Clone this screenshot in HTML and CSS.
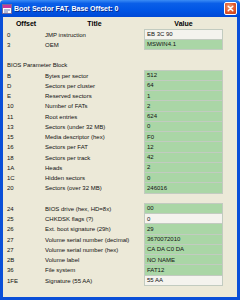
FILE: index.html
```html
<!DOCTYPE html>
<html>
<head>
<meta charset="utf-8">
<link rel="stylesheet" href="styles.css">
</head>
<body>
<div class="window">
  <div class="titlebar">
    <svg class="appicon" width="10" height="10" viewBox="0 0 10 10">
      <rect x="0.5" y="0.5" width="9" height="9" fill="#fff" stroke="#7a6a9a"/>
      <rect x="1" y="1" width="8" height="3" fill="#c8389a"/>
      <rect x="2" y="5.5" width="6" height="1" fill="#6a7ab8"/>
      <rect x="2" y="7.5" width="4" height="1" fill="#6a7ab8"/>
    </svg>
    <span class="title">Boot Sector FAT, Base Offset: 0</span>
    <span class="close">
      <svg width="12" height="12" viewBox="0 0 12 12">
        <path d="M3.5 3.5 L8.5 8.5 M8.5 3.5 L3.5 8.5" stroke="#fff" stroke-width="1.6" stroke-linecap="round"/>
      </svg>
    </span>
  </div>
  <div class="frame">
    <div class="head">
      <span>Offset</span><span>Title</span><span>Value</span>
    </div>
    <div class="grid">
      <span>0</span><span>JMP instruction</span><span class="val wht top">EB 3C 90</span>
      <span>3</span><span>OEM</span><span class="val">MSWIN4.1</span>
      <span></span><span></span><span></span>
      <span class="section">BIOS Parameter Block</span>
      <span>B</span><span>Bytes per sector</span><span class="val top">512</span>
      <span>D</span><span>Sectors per cluster</span><span class="val">64</span>
      <span>E</span><span>Reserved sectors</span><span class="val">1</span>
      <span>10</span><span>Number of FATs</span><span class="val">2</span>
      <span>11</span><span>Root entries</span><span class="val">624</span>
      <span>13</span><span>Sectors (under 32 MB)</span><span class="val">0</span>
      <span>15</span><span>Media descriptor (hex)</span><span class="val">F0</span>
      <span>16</span><span>Sectors per FAT</span><span class="val">12</span>
      <span>18</span><span>Sectors per track</span><span class="val">42</span>
      <span>1A</span><span>Heads</span><span class="val">2</span>
      <span>1C</span><span>Hidden sectors</span><span class="val">0</span>
      <span>20</span><span>Sectors (over 32 MB)</span><span class="val">246016</span>
      <span></span><span></span><span></span>
      <span>24</span><span>BIOS drive (hex, HD=8x)</span><span class="val top">00</span>
      <span>25</span><span>CHKDSK flags (?)</span><span class="val wht">0</span>
      <span>26</span><span>Ext. boot signature (29h)</span><span class="val">29</span>
      <span>27</span><span>Volume serial number (decimal)</span><span class="val">3670072010</span>
      <span>27</span><span>Volume serial number (hex)</span><span class="val">CA DA C0 DA</span>
      <span>2B</span><span>Volume label</span><span class="val">NO NAME</span>
      <span>36</span><span>File system</span><span class="val">FAT12</span>
      <span>1FE</span><span>Signature (55 AA)</span><span class="val wht">55 AA</span>
    </div>
  </div>
</div>
</body>
</html>
```
FILE: styles.css
```css
html, body {
  margin: 0;
  padding: 0;
  background: #ece9d8;
}
.window {
  width: 240px;
  height: 300px;
  display: flex;
  flex-direction: column;
  font-family: "Liberation Sans", Arial, sans-serif;
}
.titlebar {
  height: 17px;
  flex: none;
  display: flex;
  align-items: center;
  padding: 0 3px 0 2px;
  background: linear-gradient(to bottom, #3b8cf5 0%, #0a5fe8 20%, #0055e5 60%, #0049d6 100%);
  border-radius: 4px 4px 0 0;
}
.appicon {
  flex: none;
  margin-right: 2px;
}
.title {
  flex: 1;
  color: #fff;
  font-weight: bold;
  font-size: 7px;
  white-space: nowrap;
  text-shadow: 1px 1px 0 #0a2a8a;
}
.close {
  width: 11px;
  height: 11px;
  flex: none;
  border: 1px solid #fff;
  border-radius: 2px;
  background: radial-gradient(circle at 40% 35%, #f09a70 0%, #e0582e 55%, #c43c14 100%);
  display: flex;
  align-items: center;
  justify-content: center;
}
.close svg {
  width: 11px;
  height: 11px;
}
.frame {
  flex: 1;
  background: #ece9d8;
  border-left: 3px solid #0a4fd8;
  border-right: 3px solid #0a4fd8;
  border-bottom: 3px solid #0a4fd8;
  padding-left: 4px;
}
.head {
  height: 12.6px;
  display: grid;
  grid-template-columns: 38px 99px 79px;
  align-items: center;
  font-size: 7px;
  font-weight: bold;
  color: #000;
  text-align: center;
  padding-top: 0.4px;
  box-sizing: border-box;
}
.grid {
  display: grid;
  grid-template-columns: 38px 99px 79px;
  grid-auto-rows: 10.25px;
  font-size: 6px;
  color: #111;
}
.grid > span {
  display: flex;
  align-items: center;
  white-space: nowrap;
}
.section {
  grid-column: 1 / 4;
}
.val {
  box-sizing: border-box;
  background: #aad6a6;
  border-left: 1px solid #c2cbc0;
  border-right: 1px solid #c2cbc0;
  border-bottom: 1px solid #c2cbc0;
  padding-left: 2px;
}
.val.wht {
  background: #f4f3ee;
}
.val.top {
  box-shadow: 0 -1px 0 #c2cbc0;
}
```
